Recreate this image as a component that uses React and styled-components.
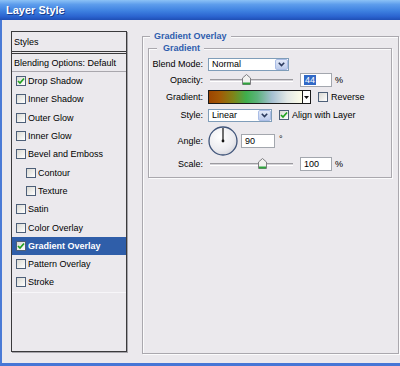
import React from 'react';
import styled, { createGlobalStyle } from 'styled-components';

const GlobalStyle = createGlobalStyle`
  html, body {
    margin: 0;
    padding: 0;
    background: #ebe9ed;
  }
  body {
    font-family: "Liberation Sans", Arial, sans-serif;
    font-size: 9px;
    color: #000;
  }
`;

const effects = [
  { name: 'Drop Shadow', checked: true },
  { name: 'Inner Shadow' },
  { name: 'Outer Glow' },
  { name: 'Inner Glow' },
  { name: 'Bevel and Emboss' },
  { name: 'Contour', sub: true },
  { name: 'Texture', sub: true },
  { name: 'Satin' },
  { name: 'Color Overlay' },
  { name: 'Gradient Overlay', checked: true, selected: true },
  { name: 'Pattern Overlay' },
  { name: 'Stroke' },
];

const Check = () => (
  <svg width="8" height="8" viewBox="0 0 8 8">
    <path d="M1 4 L3 6 L7 1.5" fill="none" stroke="#1fa11f" strokeWidth="1.7" />
  </svg>
);

const Chevron = () => (
  <svg width="7" height="5" viewBox="0 0 7 5">
    <path d="M0.8 0.8 L3.5 3.6 L6.2 0.8" fill="none" stroke="#2b3a5c" strokeWidth="1.6" />
  </svg>
);

const Thumb = () => (
  <svg width="9" height="11" viewBox="0 0 9 11">
    <polygon points="0.5,4 4.5,0.5 8.5,4 8.5,10.5 0.5,10.5" fill="#f1f1ef" stroke="#7d7d80" />
    <rect x="1" y="8.5" width="7" height="2" fill="#2fa43c" />
  </svg>
);

const AngleDial = ({ angle }) => {
  const rad = (angle * Math.PI) / 180;
  const x = 15 + Math.cos(rad) * 13;
  const y = 15 - Math.sin(rad) * 13;
  return (
    <svg width="30" height="30" viewBox="0 0 30 30">
      <defs>
        <radialGradient id="dialFill" cx="40%" cy="35%" r="70%">
          <stop offset="0" stopColor="#ffffff" />
          <stop offset="0.7" stopColor="#ebebef" />
          <stop offset="1" stopColor="#d5d5dc" />
        </radialGradient>
      </defs>
      <circle cx="15" cy="15" r="14" fill="url(#dialFill)" stroke="#3f5479" strokeWidth="1.3" />
      <line x1="15" y1="15" x2={x} y2={y} stroke="#111" strokeWidth="1.2" />
      <circle cx="15" cy="15" r="1.4" fill="#111" />
    </svg>
  );
};

const App = () => {
  const opacity = 44;
  const scale = 100;
  return (
    <>
      <GlobalStyle />
      <Window>
        <TitleBar>Layer Style</TitleBar>
        <Body>
          <ListBox>
            <HeaderItem>Styles</HeaderItem>
            <BlendItem>Blending Options: Default</BlendItem>
            {effects.map((e) => (
              <EffectItem key={e.name} $sub={e.sub} $selected={e.selected}>
                <CheckBox>{e.checked && <Check />}</CheckBox>
                {e.name}
              </EffectItem>
            ))}
            <ListFiller />
          </ListBox>

          <OuterGroup>
            <GroupTitle $left={7} $pad="0 4px">Gradient Overlay</GroupTitle>
            <InnerGroup>
              <GroupTitle $left={8} $pad="0 4px 0 6px">Gradient</GroupTitle>

              <Row $top={8}>
                <Label>Blend Mode:</Label>
                <Select $w={81}>
                  Normal
                  <DropBtn><Chevron /></DropBtn>
                </Select>
              </Row>

              <Row $top={2}>
                <Label>Opacity:</Label>
                <Track>
                  <ThumbSlot style={{ left: `${(opacity / 100) * 83 - 5}px` }}>
                    <Thumb />
                  </ThumbSlot>
                </Track>
                <TextInput $w={32} $ml={7}>
                  <Selected>{opacity}</Selected>
                </TextInput>
                <Unit>%</Unit>
              </Row>

              <Row $top={3}>
                <Label>Gradient:</Label>
                <GradientWell>
                  <GradientFill />
                  <GradientArrow>
                    <svg width="5" height="3" viewBox="0 0 5 3">
                      <polygon points="0,0 5,0 2.5,3" fill="#111" />
                    </svg>
                  </GradientArrow>
                </GradientWell>
                <Option>
                  <CheckBox />
                  Reverse
                </Option>
              </Row>

              <Row $top={4}>
                <Label>Style:</Label>
                <Select $w={64}>
                  Linear
                  <DropBtn><Chevron /></DropBtn>
                </Select>
                <Option>
                  <CheckBox><Check /></CheckBox>
                  Align with Layer
                </Option>
              </Row>

              <Row $top={3} $h={31}>
                <Label>Angle:</Label>
                <AngleDial angle={90} />
                <TextInput $w={34} $ml={3}>90</TextInput>
                <Degree>°</Degree>
              </Row>

              <Row $top={1}>
                <Label>Scale:</Label>
                <Track>
                  <ThumbSlot style={{ left: `${((scale - 10) / 140) * 83 - 5}px` }}>
                    <Thumb />
                  </ThumbSlot>
                </Track>
                <TextInput $w={32} $ml={7}>{scale}</TextInput>
                <Unit>%</Unit>
              </Row>
            </InnerGroup>
          </OuterGroup>
        </Body>
      </Window>
    </>
  );
};

export default App;

const Window = styled.div`
  width: 400px;
  height: 366px;
  overflow: hidden;
  display: flex;
  flex-direction: column;
  background: #ebe9ed;
`;

const TitleBar = styled.div`
  flex: none;
  height: 20px;
  display: flex;
  align-items: center;
  padding-left: 6px;
  background: linear-gradient(#8cc2f6 0%, #5d9dec 22%, #3d80e0 55%, #2b64d0 82%, #1f4fb5 100%);
  color: #fff;
  font-size: 11px;
  font-weight: bold;
  text-shadow: 1px 1px 0 #1c3f8e;
`;

const Body = styled.div`
  flex: 1;
  display: flex;
  align-items: flex-start;
  padding: 11px 0 0 9px;
  border-left: 2px solid #4a7ad6;
  border-bottom: 3px solid #4676d6;
  box-sizing: border-box;
`;

const ListBox = styled.div`
  flex: none;
  width: 116px;
  height: 321px;
  box-sizing: border-box;
  border: 1px solid #3a3a3c;
  box-shadow: 1px 1px 0 #a6a4aa;
  display: flex;
  flex-direction: column;
`;

const HeaderItem = styled.div`
  height: 19px;
  padding-left: 2px;
  display: flex;
  align-items: center;
  border-bottom: 3px double #3a3a3c;
`;

const BlendItem = styled.div`
  height: 17px;
  padding-left: 2px;
  display: flex;
  align-items: center;
  border-bottom: 1px solid #a9a7ad;
`;

const EffectItem = styled.div`
  flex: none;
  height: 18.3px;
  display: flex;
  align-items: center;
  gap: 2px;
  padding-left: ${(p) => (p.$sub ? 14 : 4)}px;
  background: ${(p) => (p.$selected ? '#2f5ea9' : 'transparent')};
  color: ${(p) => (p.$selected ? '#fff' : '#000')};
  font-weight: ${(p) => (p.$selected ? 'bold' : 'normal')};
`;

const ListFiller = styled.div`
  flex: 1;
  border-top: 1px solid #f7f6f9;
`;

const CheckBox = styled.span`
  flex: none;
  width: 10px;
  height: 10px;
  box-sizing: border-box;
  border: 1px solid #4d5f78;
  background: linear-gradient(135deg, #d9d9d3, #ffffff);
  display: inline-flex;
  align-items: center;
  justify-content: center;
`;

const OuterGroup = styled.div`
  position: relative;
  flex: none;
  width: 257px;
  height: 318px;
  margin: 5px 0 0 15px;
  padding: 11px 0 0 5px;
  box-sizing: border-box;
  border: 1px solid #aaa8ae;
  box-shadow: inset 1px 1px 0 #fbfbfc, 1px 1px 0 #fbfbfc;
`;

const InnerGroup = styled.div`
  position: relative;
  width: 244px;
  box-sizing: border-box;
  padding-bottom: 6px;
  border: 1px solid #aaa8ae;
  box-shadow: inset 1px 1px 0 #fbfbfc, 1px 1px 0 #fbfbfc;
`;

const GroupTitle = styled.span`
  position: absolute;
  top: -7px;
  left: ${(p) => p.$left}px;
  padding: ${(p) => p.$pad};
  background: #ebe9ed;
  color: #2f5dae;
  font-weight: bold;
  line-height: 12px;
`;

const Row = styled.div`
  display: flex;
  align-items: center;
  height: ${(p) => p.$h || 14}px;
  margin-top: ${(p) => p.$top}px;
`;

const Label = styled.span`
  flex: none;
  width: 54px;
  margin-right: 5px;
  text-align: right;
`;

const Select = styled.div`
  flex: none;
  width: ${(p) => p.$w}px;
  height: 13px;
  box-sizing: border-box;
  border: 1px solid #7f9db9;
  background: #fff;
  display: flex;
  align-items: center;
  justify-content: space-between;
  padding: 0 0 0 3px;
`;

const DropBtn = styled.span`
  width: 13px;
  height: 11px;
  box-sizing: border-box;
  border: 1px solid #aabde6;
  border-radius: 2px;
  background: linear-gradient(#e2e9f8, #bccbeb);
  display: flex;
  align-items: center;
  justify-content: center;
`;

const Track = styled.div`
  position: relative;
  flex: none;
  width: 83px;
  height: 3px;
  margin-left: 2px;
  box-sizing: border-box;
  border-top: 1px solid #9c9ba0;
  border-bottom: 1px solid #ffffff;
  background: #d6d4d9;
`;

const ThumbSlot = styled.span`
  position: absolute;
  top: -6px;
  display: block;
  line-height: 0;
`;

const TextInput = styled.div`
  flex: none;
  width: ${(p) => p.$w}px;
  height: 14px;
  margin-left: ${(p) => p.$ml}px;
  box-sizing: border-box;
  border: 1px solid #a3a7ae;
  background: #fff;
  padding-left: 3px;
  display: flex;
  align-items: center;
`;

const Selected = styled.span`
  background: #3169c6;
  color: #fff;
  padding: 0 1px;
  line-height: 10px;
`;

const Unit = styled.span`
  margin-left: 3px;
`;

const Degree = styled.span`
  align-self: flex-start;
  margin: 9px 0 0 4px;
`;

const GradientWell = styled.div`
  flex: none;
  display: flex;
  width: 103px;
  height: 14px;
  box-sizing: border-box;
  border: 1px solid #1a1a1a;
`;

const GradientFill = styled.div`
  flex: 1;
  background: linear-gradient(
    90deg,
    #9c4500 0%,
    #a25a06 12%,
    #7f8418 26%,
    #3fae4c 40%,
    #5cb27c 52%,
    #a6c0d2 68%,
    #e2e8e6 84%,
    #fdfde8 100%
  );
`;

const GradientArrow = styled.div`
  width: 7px;
  border-left: 1px solid #1a1a1a;
  background: #fff;
  display: flex;
  align-items: center;
  justify-content: center;
`;

const Option = styled.label`
  display: flex;
  align-items: center;
  gap: 3px;
  margin-left: 7px;
`;
